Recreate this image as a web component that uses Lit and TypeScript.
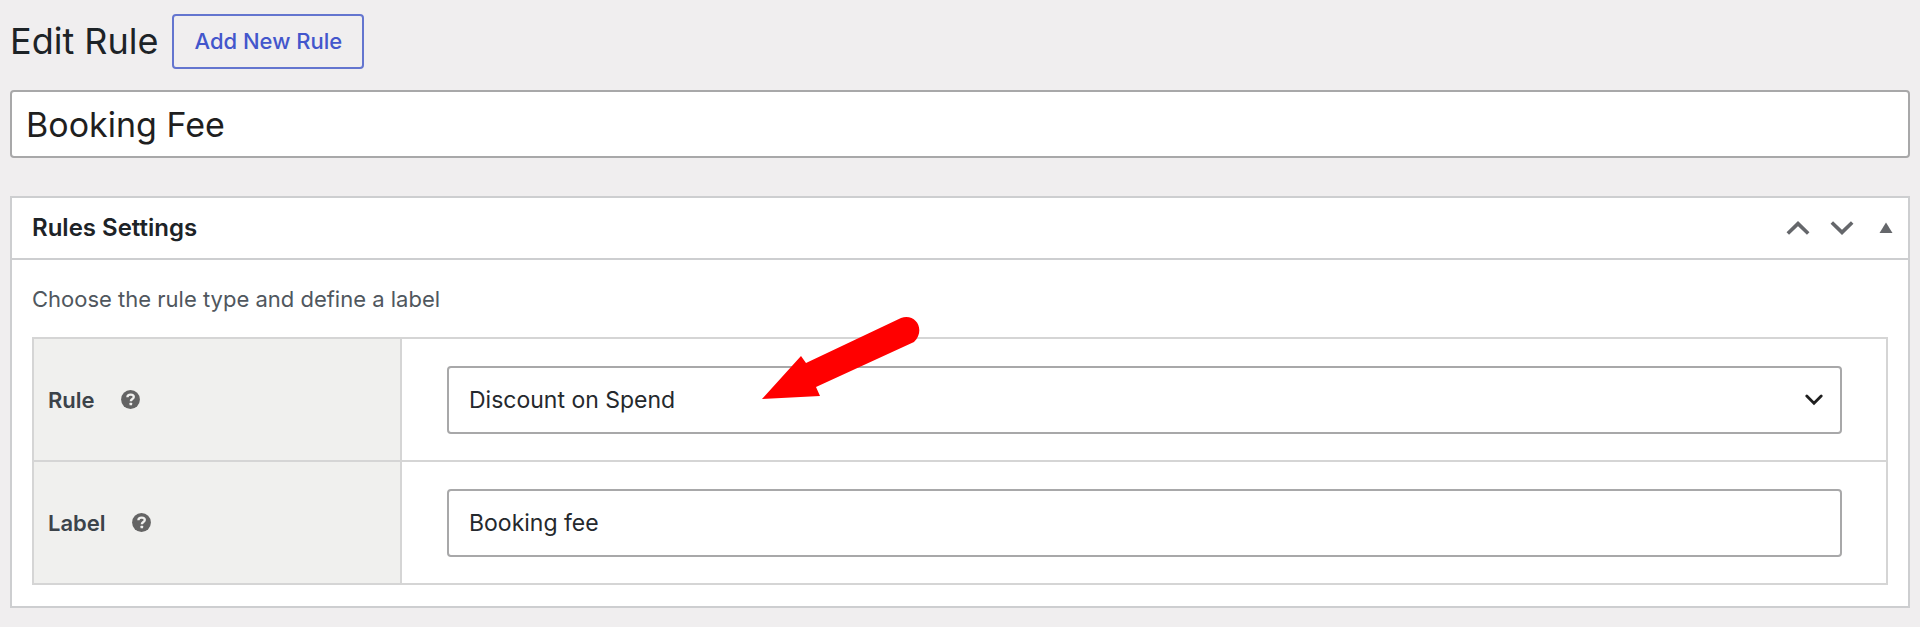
import { LitElement, html, css } from "lit";
import { customElement, property, state } from "lit/decorators.js";

@customElement("help-tip")
export class HelpTip extends LitElement {
  static styles = css`
    :host {
      display: block;
      width: 20px;
      height: 20px;
    }
    .icon {
      display: block;
      width: 20px;
      height: 20px;
    }
  `;

  @property() label = "Help";

  render() {
    return html`
      <svg class="icon" viewBox="0 0 20 20" role="img" aria-label=${this.label}>
        <circle cx="9.5" cy="9.5" r="9.4" fill="#646464" />
        <path
          d="M6.4 7.2C6.4 5.4 7.8 4.6 9.7 4.6C11.6 4.6 12.8 5.5 12.8 7C12.8 9 9.8 9 9.8 11.2"
          fill="none"
          stroke="#f0f0ee"
          stroke-width="2.3"
        />
        <rect x="8.5" y="12.8" width="2.6" height="2.5" rx="0.5" fill="#f0f0ee" />
      </svg>
    `;
  }
}

@customElement("app-root")
export class AppRoot extends LitElement {
  static styles = css`
    :host {
      display: block;
      min-height: 100vh;
      box-sizing: border-box;
      padding: 13px 10px 18px;
      background: #f0eeef;
      color: #1d2327;
      font-family: Inter, "Liberation Sans", sans-serif;
      font-size: 22px;
      line-height: 32px;
    }
    * {
      box-sizing: border-box;
    }
    .top {
      display: flex;
      align-items: center;
      gap: 14px;
      margin-bottom: 21px;
    }
    .heading {
      margin: 0;
      font-size: 36px;
      line-height: 56px;
      font-weight: 400;
    }
    .add {
      height: 55px;
      padding: 0 20px;
      border: 2px solid #6475cf;
      border-radius: 4px;
      background: transparent;
      color: #4356cc;
      font: inherit;
      font-weight: 500;
    }
    .field {
      display: block;
      width: 100%;
      height: 68px;
      margin: 0;
      padding: 0 20px;
      border: 2px solid #a8a8a9;
      border-radius: 4px;
      background: #fff;
      color: #25292d;
      font: inherit;
      font-size: 23px;
      appearance: none;
      outline: none;
    }
    .title {
      padding: 0 14px;
      color: #1f1f1f;
      font-size: 34px;
    }
    .panel {
      margin-top: 38px;
      border: 2px solid #cdced0;
      background: #fff;
    }
    .panel-head {
      display: flex;
      align-items: center;
      justify-content: space-between;
      height: 62px;
      padding: 0 0 0 20px;
      border-bottom: 2px solid #cdced0;
    }
    .panel-title {
      margin: 0;
      font-size: 24px;
      line-height: 32px;
      font-weight: 600;
    }
    .actions {
      display: flex;
      align-items: center;
    }
    .action {
      display: grid;
      place-items: center;
      width: 44px;
      height: 44px;
      padding: 0;
      border: 0;
      background: none;
    }
    .panel-body {
      padding: 23px 20px 21px;
    }
    .intro {
      margin: 0 0 22px;
      color: #50575e;
    }
    .settings {
      width: 100%;
      border-collapse: collapse;
      table-layout: fixed;
    }
    .label-col {
      width: 368px;
    }
    .name,
    .value {
      height: 123px;
      border: 2px solid #d5d5d5;
    }
    .name {
      padding: 0 14px;
      background: #f0f0ee;
      color: #3c434a;
      text-align: left;
      font-weight: 600;
    }
    .name-row {
      display: flex;
      align-items: center;
      gap: 26px;
    }
    .value {
      padding: 0 44px 0 45px;
    }
    .select-wrap {
      display: grid;
      align-items: center;
    }
    .select-wrap > * {
      grid-area: 1 / 1;
    }
    .chevron {
      justify-self: end;
      margin-right: 19px;
      pointer-events: none;
    }
    .arrow-anchor {
      position: relative;
    }
    .arrow {
      position: absolute;
      left: 311px;
      top: -51px;
      width: 164px;
      height: 88px;
      pointer-events: none;
    }
  `;

  @state() private ruleTitle = "Booking Fee";
  @state() private label = "Booking fee";

  render() {
    return html`
      <header class="top">
        <h1 class="heading">Edit Rule</h1>
        <button class="add" type="button">Add New Rule</button>
      </header>
      <input
        class="field title"
        type="text"
        aria-label="Rule title"
        .value=${this.ruleTitle}
        @input=${(e: Event) => (this.ruleTitle = (e.target as HTMLInputElement).value)}
      />
      <section class="panel">
        <div class="panel-head">
          <h2 class="panel-title">Rules Settings</h2>
          <div class="actions">
            <button class="action" type="button" aria-label="Move up">
              <svg width="24" height="16" viewBox="0 0 24 16">
                <path d="M1.8 13.5L12 3.6L22.2 13.5" fill="none" stroke="#65676b" stroke-width="3.6" />
              </svg>
            </button>
            <button class="action" type="button" aria-label="Move down">
              <svg width="24" height="16" viewBox="0 0 24 16">
                <path d="M1.8 2.5L12 12.4L22.2 2.5" fill="none" stroke="#65676b" stroke-width="3.6" />
              </svg>
            </button>
            <button class="action" type="button" aria-label="Toggle panel">
              <svg width="14" height="12" viewBox="0 0 14 12">
                <path d="M7 0.5L13.5 11H0.5Z" fill="#65676b" />
              </svg>
            </button>
          </div>
        </div>
        <div class="panel-body">
          <p class="intro">Choose the rule type and define a label</p>
          <table class="settings">
            <colgroup>
              <col class="label-col" />
              <col />
            </colgroup>
            <tbody>
              <tr>
                <th class="name" scope="row">
                  <div class="name-row">
                    <label for="rule">Rule</label>
                    <help-tip label="Help: rule"></help-tip>
                  </div>
                </th>
                <td class="value">
                  <div class="arrow-anchor">
                    <div class="select-wrap">
                      <select class="field" id="rule">
                        <option selected>Discount on Spend</option>
                      </select>
                      <svg class="chevron" width="18" height="12" viewBox="0 0 18 12">
                        <path
                          d="M1.8 2L9 9.2L16.2 2"
                          fill="none"
                          stroke="#1f1f1f"
                          stroke-width="2.8"
                          stroke-linecap="round"
                        />
                      </svg>
                    </div>
                    <svg class="arrow" viewBox="0 0 164 88" aria-hidden="true">
                      <path
                        d="M4 84L43 41L48 48L143 3C158 -2 168 15 156 27L58 72L62 81Z"
                        fill="#ff0000"
                      />
                    </svg>
                  </div>
                </td>
              </tr>
              <tr>
                <th class="name" scope="row">
                  <div class="name-row">
                    <label for="label">Label</label>
                    <help-tip label="Help: label"></help-tip>
                  </div>
                </th>
                <td class="value">
                  <input
                    class="field"
                    id="label"
                    type="text"
                    .value=${this.label}
                    @input=${(e: Event) => (this.label = (e.target as HTMLInputElement).value)}
                  />
                </td>
              </tr>
            </tbody>
          </table>
        </div>
      </section>
    `;
  }
}
